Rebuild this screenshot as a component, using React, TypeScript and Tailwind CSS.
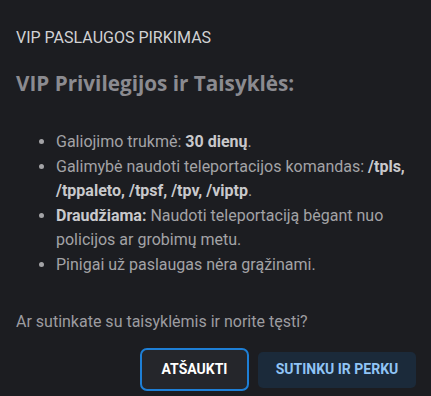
export default function App() {
  return (
    <div className="w-[431px] h-[396px] bg-[#1c1d21] overflow-hidden font-['Roboto',sans-serif]">
      {/* Dialog title */}
      <h2 className="pt-[26px] px-4 text-[16px] leading-6 text-[#d2d2d4]">VIP PASLAUGOS PIRKIMAS</h2>

      {/* Dialog content */}
      <div className="px-4">
        <h3 className="mt-[19px] font-['Open_Sans',sans-serif] font-bold text-[20.7px] leading-7 text-[#8b8b90]">
          VIP Privilegijos ir Taisyklės:
        </h3>
        <ul className="mt-[33px] list-disc pl-10 text-[16px] leading-[24.5px] text-[#a3a3a6] marker:text-[#a3a3a6]">
          <li>
            Galiojimo trukmė: <b className="text-[#c9c9cc]">30 dienų</b>.
          </li>
          <li>
            Galimybė naudoti teleportacijos komandas:{' '}
            <b className="text-[#c9c9cc]">/tpls, /tppaleto, /tpsf, /tpv, /viptp</b>.
          </li>
          <li>
            <b className="text-[#c9c9cc]">Draudžiama:</b> Naudoti teleportaciją bėgant nuo policijos ar grobimų metu.
          </li>
          <li>Pinigai už paslaugas nėra grąžinami.</li>
        </ul>
        <p className="mt-[33px] text-[16px] leading-6 text-[#9c9ca0]">Ar sutinkate su taisyklėmis ir norite tęsti?</p>
      </div>

      {/* Actions */}
      <div className="mt-[14px] pr-[15px] flex justify-end items-center gap-[9px]">
        <button className="w-[109px] h-[43px] rounded-[7px] border-2 border-[#1e7fd6] bg-[#25262b] text-white font-bold text-[14px]">
          ATŠAUKTI
        </button>
        <button className="w-[158px] h-[36px] rounded-[5px] bg-[#1b2a3a] text-[#90c4f5] font-bold text-[14px]">
          SUTINKU IR PERKU
        </button>
      </div>
    </div>
  )
}
